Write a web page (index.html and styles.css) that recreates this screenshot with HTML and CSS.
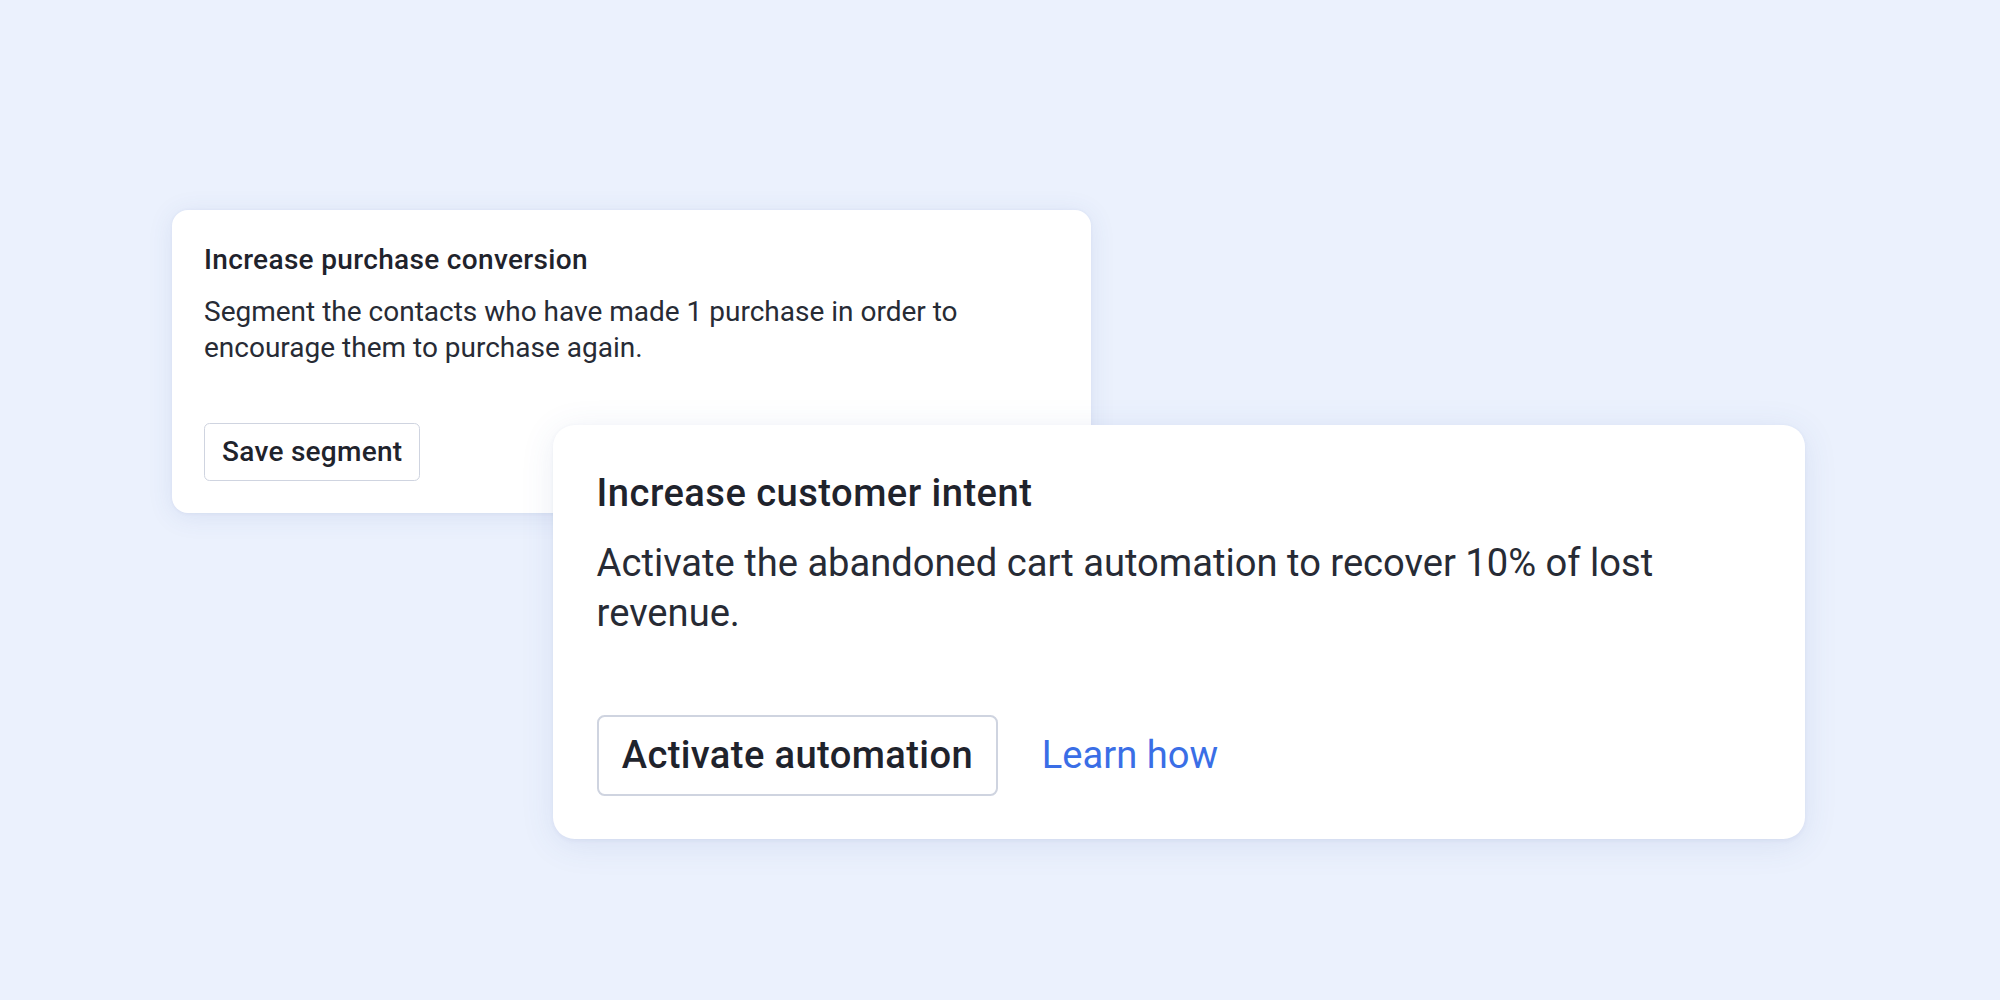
FILE: index.html
```html
<!DOCTYPE html>
<html lang="en">
<head>
<meta charset="utf-8">
<title>Recommendations</title>
<link rel="stylesheet" href="styles.css">
</head>
<body>
<main class="stage">
  <section class="card card--small">
    <h2 class="card__title">Increase purchase conversion</h2>
    <p class="card__text">Segment the contacts who have made 1 purchase in order to encourage them to purchase again.</p>
    <div class="card__actions">
      <button class="btn" type="button">Save segment</button>
    </div>
  </section>
  <section class="card card--large">
    <h2 class="card__title">Increase customer intent</h2>
    <p class="card__text">Activate the abandoned cart automation to recover 10% of lost revenue.</p>
    <div class="card__actions">
      <button class="btn" type="button">Activate automation</button>
      <a class="link" href="#">Learn how</a>
    </div>
  </section>
</main>
</body>
</html>
```
FILE: styles.css
```css
* { box-sizing: border-box; }

html, body {
  margin: 0;
  padding: 0;
  background: #ebf1fd;
}

body {
  width: 2000px;
  height: 1000px;
  overflow: hidden;
  font-family: Roboto, "Liberation Sans", sans-serif;
  color: #20242d;
}

.stage {
  display: grid;
  grid-template-columns: max-content;
  padding: 210px 0 0 172px;
}

.card {
  grid-area: 1 / 1;
  align-self: start;
  justify-self: start;
  background: #ffffff;
  border-radius: 0.57em;
  padding: 1.143em 1.143em 1.13em 1.143em;
  width: 32.82em;
  box-shadow: 0 0.14em 0.9em rgba(60, 90, 160, 0.10), 0 0.03em 0.12em rgba(60, 90, 160, 0.06);
}

.card--small {
  font-size: 28px;
}

.card--large {
  font-size: 38.14px;
  margin: 215px 0 0 381px;
}

.card__title {
  margin: 0;
  font-size: 1em;
  font-weight: 500;
  line-height: 1.286em;
  letter-spacing: 0.012em;
  color: #1f232c;
}

.card__text {
  margin: 0.571em 0 0 0;
  font-size: 1em;
  font-weight: 400;
  line-height: 1.3em;
  color: #272b35;
}

.card__actions {
  display: flex;
  align-items: center;
  gap: 1.143em;
  margin-top: 2.01em;
}

.btn {
  font-family: inherit;
  font-size: 1em;
  font-weight: 500;
  line-height: 1.29em;
  letter-spacing: 0.01em;
  color: #1f232c;
  background: #ffffff;
  border: 0.071em solid #cfd4e0;
  border-radius: 0.2em;
  padding: 0.357em 0.607em;
  margin: 0;
}

.link {
  font-size: 1em;
  line-height: 1.25em;
  color: #3a6ee6;
  text-decoration: none;
}
```
